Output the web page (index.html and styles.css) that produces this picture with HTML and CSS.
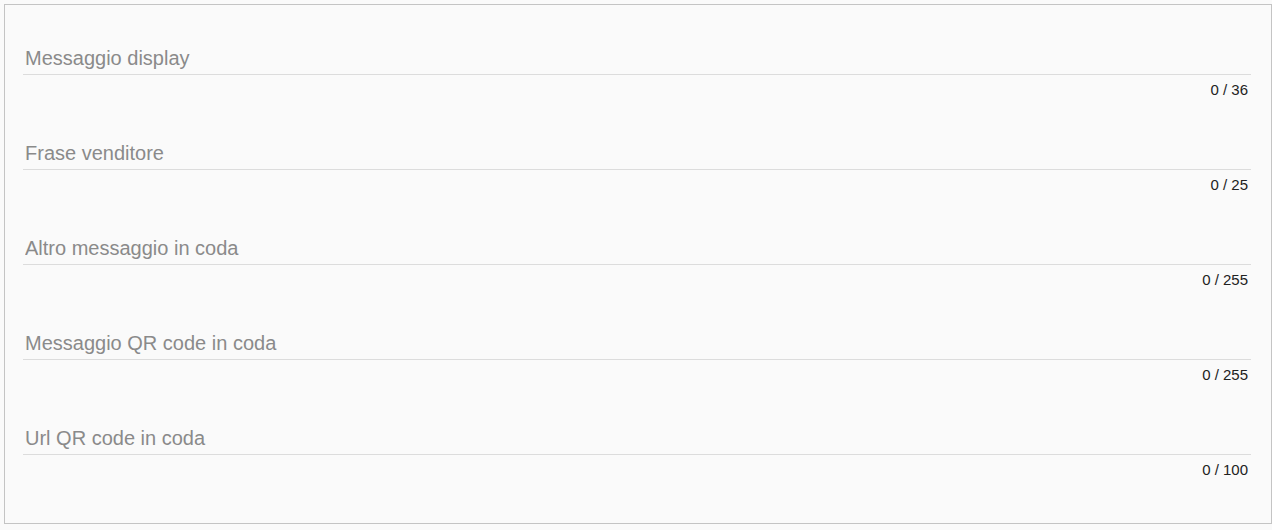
FILE: index.html
```html
<html>
  <head>
    <link rel="stylesheet" href="styles.css">
  </head>
  <body>
    <div class="panel">
      <div class="field">
        <input class="entry" type="text" placeholder="Messaggio display" maxlength="36">
        <div class="hint">0 / 36</div>
      </div>
      <div class="field">
        <input class="entry" type="text" placeholder="Frase venditore" maxlength="25">
        <div class="hint">0 / 25</div>
      </div>
      <div class="field">
        <input class="entry" type="text" placeholder="Altro messaggio in coda" maxlength="255">
        <div class="hint">0 / 255</div>
      </div>
      <div class="field">
        <input class="entry" type="text" placeholder="Messaggio QR code in coda" maxlength="255">
        <div class="hint">0 / 255</div>
      </div>
      <div class="field">
        <input class="entry" type="text" placeholder="Url QR code in coda" maxlength="100">
        <div class="hint">0 / 100</div>
      </div>
    </div>
  </body>
</html>
```

FILE: styles.css
```css
body {
  margin: 4px 0 0 4px;
  background-color: #fafafa;
  font-family: "Liberation Sans", Arial, sans-serif;
}

.panel {
  box-sizing: border-box;
  width: 1268px;
  height: 520px;
  border: 1px solid #c4c4c4;
  background-color: #fafafa;
  padding: 0 20px 0 18px;
}

.field {
  padding-top: 42px;
  margin-bottom: 2px;
}

.entry {
  display: block;
  box-sizing: border-box;
  width: 100%;
  height: 28px;
  margin: 0;
  padding: 0 2px 4px 2px;
  border: none;
  border-bottom: 1px solid #dcdcdc;
  background: transparent;
  font-family: inherit;
  font-size: 20px;
  line-height: 23px;
  color: #333;
  outline: none;
}

.entry::placeholder {
  color: #8a8a8a;
}

.hint {
  margin-top: 7px;
  padding-right: 3px;
  text-align: right;
  font-size: 15px;
  line-height: 16px;
  color: #222;
}
```
